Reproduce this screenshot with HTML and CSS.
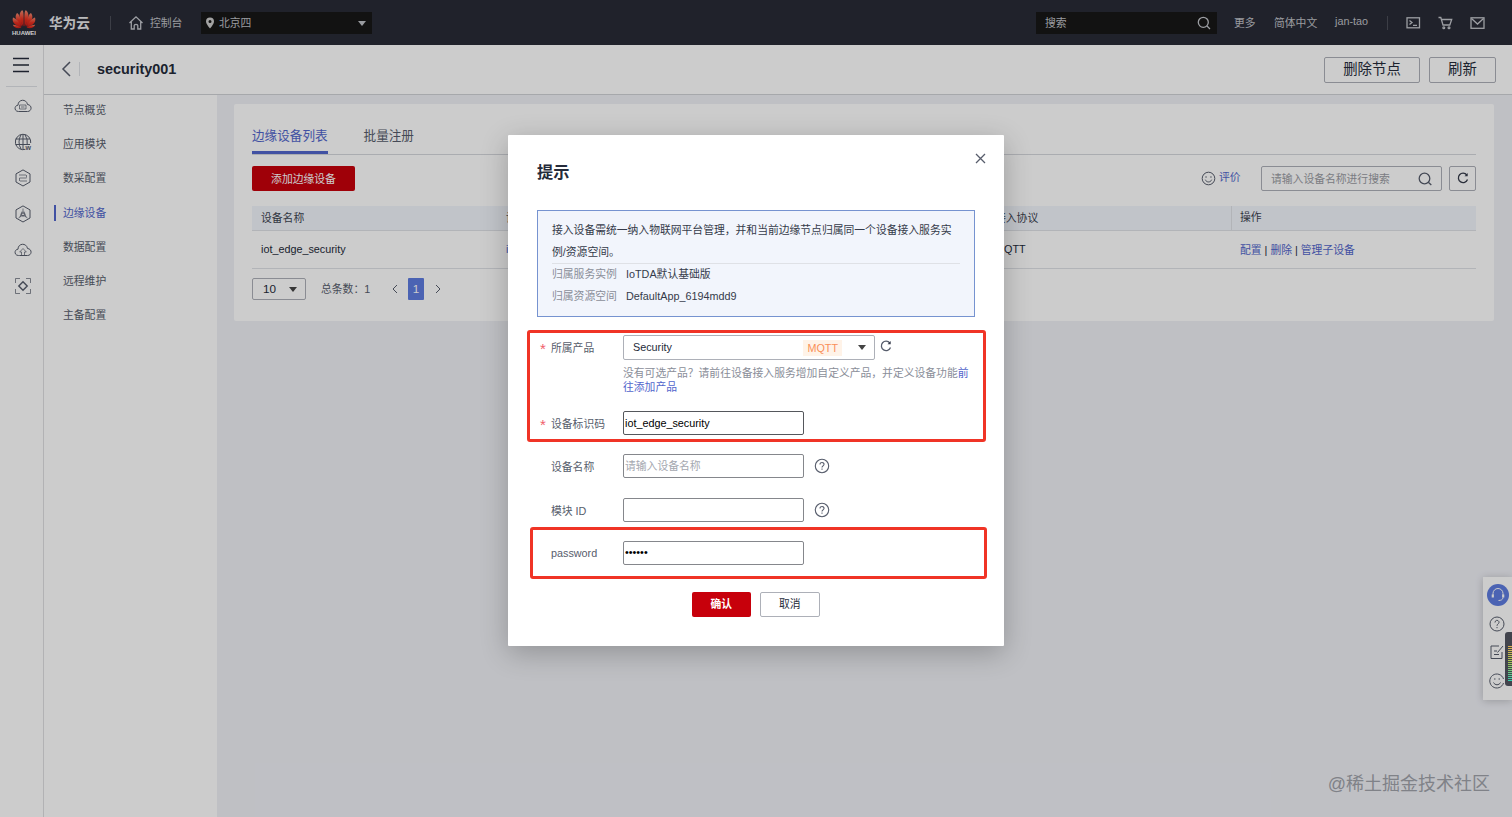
FILE: index.html
```
<!DOCTYPE html>
<html lang="zh-CN">
<head>
    <meta charset="UTF-8">
    <meta name="viewport" content="width=device-width, initial-scale=1.0">
    <title>security001 - 华为云</title>
    <link rel="stylesheet" href="styles.css">
</head>
<body>
    <header class="topbar">
        <svg class="logo" width="26" height="28" viewBox="0 0 26 28">
            <defs>
                <linearGradient id="petal" x1="0" y1="0" x2="0" y2="1">
                    <stop offset="0" stop-color="#f08a70"/>
                    <stop offset="0.55" stop-color="#e8301f"/>
                    <stop offset="1" stop-color="#c81a18"/>
                </linearGradient>
            </defs>
            <g fill="url(#petal)">
                <path d="M12.5 17.5C9 12 6.5 5 11 1.2C12.6 1 12.9 6 12.5 17.5Z"/>
                <path d="M13.5 17.5C17 12 19.5 5 15 1.2C13.4 1 13.1 6 13.5 17.5Z"/>
                <path d="M11.5 17.5C6 14 2.5 8.5 6 4C8 4.5 10 10 11.5 17.5Z"/>
                <path d="M14.5 17.5C20 14 23.5 8.5 20 4C18 4.5 16 10 14.5 17.5Z"/>
                <path d="M10.5 18C4 17 0.5 13 2 8.5C5 9.5 8.5 13 10.5 18Z"/>
                <path d="M15.5 18C22 17 25.5 13 24 8.5C21 9.5 17.5 13 15.5 18Z"/>
                <path d="M10.5 18.7C6 20 3 18.5 1.8 15.8C4.5 16 8 17 10.5 18.7Z"/>
                <path d="M15.5 18.7C20 20 23 18.5 24.2 15.8C21.5 16 18 17 15.5 18.7Z"/>
            </g>
            <text x="13" y="25.5" text-anchor="middle" textLength="24" lengthAdjust="spacingAndGlyphs" class="logo-text">HUAWEI</text>
        </svg>
        <span class="brand">华为云</span>
        <span class="sep"></span>
        <svg class="home" width="16" height="16" viewBox="0 0 16 16"><path d="M1.5 8L8 1.8L14.5 8M3.3 6.8V14H6.2V10.5C6.2 9 9.8 9 9.8 10.5V14H12.7V6.8"/></svg>
        <span class="console">控制台</span>
        <div class="region">
            <svg width="10" height="12" viewBox="0 0 10 12"><path fill="#ccc" fill-rule="evenodd" d="M5 0.5A4 4 0 0 1 9 4.5C9 7 5 11.5 5 11.5C5 11.5 1 7 1 4.5A4 4 0 0 1 5 0.5ZM5 3A1.5 1.5 0 1 0 5 6A1.5 1.5 0 1 0 5 3Z"/></svg>
            <span>北京四</span>
            <i class="caret"></i>
        </div>
        <div class="top-search">
            <span>搜索</span>
            <svg width="14" height="14" viewBox="0 0 14 14"><circle cx="6.3" cy="6.3" r="5"/><path d="M10 10L13 13"/></svg>
        </div>
        <span class="more">更多</span>
        <span class="lang">简体中文</span>
        <span class="user">jan-tao</span>
        <span class="sep sep-right"></span>
        <div class="top-icons">
            <svg width="15" height="14" viewBox="0 0 15 14"><rect x="1" y="1.8" width="12.5" height="10"/><path d="M3.5 4.5L6 6.5L3.5 8.5M7 9.3H11"/></svg>
            <svg width="15" height="14" viewBox="0 0 15 14"><path d="M0.5 1.5H2.8L5 9H11.8L13.7 3.5H3.5"/><circle cx="5.8" cy="11.8" r="0.9"/><circle cx="11" cy="11.8" r="0.9"/></svg>
            <svg width="15" height="14" viewBox="0 0 15 14"><rect x="1" y="1.8" width="13" height="10.5"/><path d="M1.5 2.5L7.5 8L13.5 2.5"/></svg>
        </div>
    </header>

    <div class="page">
        <nav class="rail">
            <svg class="burger" width="18" height="16" viewBox="0 0 18 16"><path d="M1 1.5H17M1 8H17M1 14.5H17"/></svg>
            <div class="rail-icons">
                <svg width="18" height="18" viewBox="0 0 18 18"><path d="M4.5 14.5C0 14.5 0 8.5 4 8.2C4 2 12.5 1.5 13.5 7.5C18.5 8 18 14.5 13.5 14.5Z"/><path d="M5.5 8H12V12H5.5ZM7 10H10.5" class="thin"/></svg>
                <svg width="18" height="18" viewBox="0 0 18 18"><path d="M11.5 16.3A7.7 7.7 0 1 1 16.7 10"/><path d="M9 1.3V16.5M1.5 6H16M1.5 11.5H16M7 1.7Q3 9 7 16M11 1.7Q14 6 13.2 11.5"/><text x="11.5" y="16.5" class="globe-w">w</text></svg>
                <svg width="18" height="18" viewBox="0 0 18 18"><path d="M9 0.9L16 4.9V13L9 17L2 13V4.9Z"/><path d="M5 6H12M12.5 6V8.5M5.5 9H12.5M5.5 9V12M6 12H13" class="thin"/></svg>
                <svg width="18" height="18" viewBox="0 0 18 18"><path d="M9 0.9L16 4.9V13L9 17L2 13V4.9Z"/><path d="M9 3.5V8M9 10L4.5 13M9 10L13.5 13M6 12L8 6.5M12 12L10 6.5" class="thin"/><circle cx="9" cy="9.5" r="1.6"/></svg>
                <svg width="18" height="18" viewBox="0 0 18 18"><path d="M5.5 14.5H4.5C0 14.5 0 8.5 4 8.2C4 2 12.5 1.5 13.5 7.5C18.5 8 18 14.5 13.5 14.5Z"/><path d="M7.5 14V11H5.7L9 7.5L12.3 11H10.5V14" class="thin"/></svg>
                <svg width="18" height="18" viewBox="0 0 18 18"><path d="M1.5 6V1.5H6M12 1.5H16.5V6M16.5 12V16.5H12M6 16.5H1.5V12" class="thin"/><path d="M9 4.8L13.2 9L9 13.2L4.8 9Z" class="bold"/></svg>
            </div>
        </nav>

        <div class="main">
            <div class="titlebar">
                <svg class="back" width="10" height="16" viewBox="0 0 10 16"><path d="M9 1L2 8L9 15"/></svg>
                <h1>security001</h1>
                <button class="btn-lg">删除节点</button>
                <button class="btn-lg btn-refresh">刷新</button>
            </div>
            <div class="body">
                <ul class="menu">
                    <li>节点概览</li>
                    <li>应用模块</li>
                    <li>数采配置</li>
                    <li class="active">边缘设备</li>
                    <li>数据配置</li>
                    <li>远程维护</li>
                    <li>主备配置</li>
                </ul>
                <div class="content">
                    <div class="card">
                        <div class="tabs">
                            <span class="tab active">边缘设备列表</span>
                            <span class="tab">批量注册</span>
                        </div>
                        <div class="toolbar">
                            <button class="btn-red add">添加边缘设备</button>
                            <svg class="smile" width="15" height="15" viewBox="0 0 15 15"><circle cx="7.5" cy="7.5" r="6.3"/><path d="M4.3 8.7C5.5 11.7 9.5 11.7 10.7 8.7M4.3 6H5.8M9.2 6H10.7"/></svg>
                            <a class="rate">评价</a>
                            <div class="search">
                                <span>请输入设备名称进行搜索</span>
                                <svg width="14" height="14" viewBox="0 0 14 14"><circle cx="6.5" cy="6.5" r="5.3"/><path d="M10.3 10.3L13.3 13"/></svg>
                            </div>
                            <button class="reload">
                                <svg width="12" height="12" viewBox="0 0 12 12"><path d="M9.8 3A4.7 4.7 0 1 0 10.5 7.5"/><path d="M10.7 1V4.2H7.5Z" class="tip"/></svg>
                            </button>
                        </div>
                        <div class="row head">
                            <span>设备名称</span><span>设备ID</span><span>接入协议</span><span class="ops">操作</span>
                        </div>
                        <div class="row">
                            <span>iot_edge_security</span><span><a>iot_edge</a></span><span>MQTT</span><span class="ops"><a>配置</a> | <a>删除</a> | <a>管理子设备</a></span>
                        </div>
                        <div class="pager">
                            <div class="size"><span>10</span><i class="caret"></i></div>
                            <span class="total">总条数：1</span>
                            <svg width="6" height="10" viewBox="0 0 6 10"><path d="M5 1L1 5L5 9"/></svg>
                            <span class="num">1</span>
                            <svg width="6" height="10" viewBox="0 0 6 10"><path d="M1 1L5 5L1 9"/></svg>
                        </div>
                    </div>
                </div>
            </div>
        </div>
    </div>

    <div class="float">
        <span class="service">
            <svg width="16" height="16" viewBox="0 0 16 16"><path d="M3 8V6.5A5 5 0 0 1 13 6.5V8M13 10.5C13 12.5 11 13.5 8.5 13.5"/><path d="M2.8 7.5V10.5M13.2 7.5V10.5" class="ear"/></svg>
        </span>
        <svg width="16" height="16" viewBox="0 0 16 16"><circle cx="8" cy="8" r="7"/><path d="M6 6.5C6 3.5 10.2 3.8 10 6.5C9.9 7.8 8 8 8 9.8M8 11V12.2"/></svg>
        <svg width="16" height="16" viewBox="0 0 16 16"><path d="M10 2H2V14.5H13V8M5 7H8M5 10.5H10M8.5 8.5L14 2"/></svg>
        <svg width="16" height="16" viewBox="0 0 16 16"><path d="M14.5 6A7 7 0 1 0 14.5 10M4.5 9.5C6 12.5 10 12.5 11.5 9.5M5 6H6.5M9.5 6H11"/></svg>
    </div>

    <div class="mask"></div>
    <div class="meter"><i></i></div>

    <div class="modal">
        <svg class="close" width="11" height="11" viewBox="0 0 11 11"><path d="M1 1L10 10M10 1L1 10"/></svg>
        <h2>提示</h2>
        <div class="info">
            <p>接入设备需统一纳入物联网平台管理，并和当前边缘节点归属同一个设备接入服务实<br>例/资源空间。</p>
            <div class="info-list">
                <div><label>归属服务实例</label>IoTDA默认基础版</div>
                <div><label>归属资源空间</label>DefaultApp_6194mdd9</div>
            </div>
        </div>
        <div class="field product">
            <label><b>*</b>所属产品</label>
            <div class="control">
                <div class="select-line">
                    <div class="select"><span>Security</span><em>MQTT</em><i class="caret"></i></div>
                    <svg width="12" height="12" viewBox="0 0 12 12"><path d="M9.8 3A4.7 4.7 0 1 0 10.5 7.5"/><path d="M10.7 1V4.2H7.5Z" class="tip"/></svg>
                </div>
                <p class="hint">没有可选产品？请前往设备接入服务增加自定义产品，并定义设备功能<a>前<br>往添加产品</a></p>
            </div>
        </div>
        <div class="field">
            <label><b>*</b>设备标识码</label>
            <input class="dark" type="text" value="iot_edge_security">
        </div>
        <div class="field">
            <label>设备名称</label>
            <input type="text" placeholder="请输入设备名称">
            <svg class="help" width="16" height="16" viewBox="0 0 16 16"><circle cx="8" cy="8" r="6.7"/><path d="M6 6.5C6 3.7 10.2 3.9 10 6.5C9.9 7.8 8 8 8 9.5M8 10.6V11.8"/></svg>
        </div>
        <div class="field">
            <label>模块 ID</label>
            <input type="text">
            <svg class="help" width="16" height="16" viewBox="0 0 16 16"><circle cx="8" cy="8" r="6.7"/><path d="M6 6.5C6 3.7 10.2 3.9 10 6.5C9.9 7.8 8 8 8 9.5M8 10.6V11.8"/></svg>
        </div>
        <div class="field">
            <label>password</label>
            <input type="text" class="pwd" value="••••••">
        </div>
        <div class="actions">
            <button class="btn-red ok">确认</button>
            <button class="cancel">取消</button>
        </div>
        <div class="mark mark-top"></div>
        <div class="mark mark-bottom"></div>
    </div>

    <div class="watermark">@稀土掘金技术社区</div>
</body>
</html>
```
FILE: styles.css
```
*{
    margin: 0;
    padding: 0;
    box-sizing: border-box;
}
body{
    width: 1512px;
    height: 817px;
    overflow: hidden;
    font-family: "Liberation Sans", "Noto Sans CJK SC", sans-serif;
    font-size: 10.8px;
    color: #252b3a;
    background-color: #eff0f6;
}
svg{
    fill: none;
    stroke: #575d6c;
    flex: none;
}
span, label{
    white-space: nowrap;
}
button, input{
    font-family: inherit;
    font-size: 10.8px;
    outline: none;
}
a{
    color: #5266cc;
}
.caret{
    border: 4px solid transparent;
    border-top: 5px solid #444;
    border-bottom: 0;
}
.topbar{
    height: 45px;
    padding-left: 11px;
    display: flex;
    align-items: center;
    background-color: #282b36;
    color: #c0c2c8;
}
.topbar svg{
    stroke: #c4c6cc;
    stroke-width: 1.3;
}
.topbar .logo{
    stroke: none;
    height: 28px;
}
.topbar span{
    padding-bottom: 2px;
}
.logo-text{
    font-size: 6px;
    font-weight: bold;
    fill: #fff;
}
.brand{
    margin-left: 12px;
    width: 49px;
    font-size: 13.6px;
    font-weight: bold;
    color: #e8e9ec;
}
.sep{
    width: 1px;
    height: 14px;
    margin-left: 12px;
    background-color: #4b4e58;
}
.home{
    margin-left: 17px;
}
.console{
    margin-left: 6px;
    width: 33px;
}
.region{
    margin-left: 18px;
    width: 171px;
    height: 22px;
    padding: 0 6px 0 4px;
    display: flex;
    align-items: center;
    background-color: #171717;
}
.region svg{
    stroke: none;
    margin-right: 4px;
}
.region .caret{
    margin-left: auto;
    margin-top: 2px;
    border-top-color: #c0c2c8;
}
.top-search{
    margin-left: 664px;
    width: 181px;
    height: 22px;
    padding: 0 6px 0 9px;
    display: flex;
    align-items: center;
    justify-content: space-between;
    background-color: #171717;
}
.more{
    margin-left: 17px;
    width: 22px;
}
.lang{
    margin-left: 18px;
    width: 43px;
}
.topbar .user{
    margin-left: 18px;
    width: 34px;
    padding-bottom: 3px;
}
.sep-right{
    margin-left: 18px;
}
.top-icons{
    margin-left: 18px;
    display: flex;
    gap: 17px;
}
.page{
    display: flex;
    height: 772px;
}
.rail{
    width: 44px;
    background-color: #fff;
    border-right: 1px solid #dfdfe2;
}
.burger{
    display: block;
    margin: 12px 0 0 12px;
    stroke: #252b3a;
    stroke-width: 1.6;
}
.rail-icons{
    margin: 13px 6px 0 6px;
    padding: 10px 0 0 8px;
    border-top: 1px solid #dfe1e6;
    display: flex;
    flex-direction: column;
    gap: 18px;
}
.thin{
    stroke-width: 0.7;
}
.bold{
    stroke-width: 1.4;
}
.globe-w{
    font-size: 7px;
    font-weight: bold;
    fill: #575d6c;
    stroke: none;
}
.main{
    flex: 1;
    display: flex;
    flex-direction: column;
}
.titlebar{
    height: 50px;
    padding: 0 16px 0 17px;
    display: flex;
    align-items: center;
    background-color: #fff;
    border-bottom: 1px solid #d0d2d6;
}
.back{
    margin-bottom: 2px;
    stroke-width: 1.5;
}
.titlebar h1{
    flex: 1;
    margin: 0 0 2px 8px;
    padding-left: 17px;
    border-left: 1px solid #dfe1e6;
    font-size: 14.4px;
    line-height: 14px;
    color: #252b3a;
}
.btn-lg{
    width: 96px;
    height: 26px;
    padding-bottom: 2px;
    border: 1px solid #adb0b8;
    border-radius: 2px;
    background-color: #fff;
    color: #252b3a;
    font-size: 14.4px;
    line-height: 22px;
}
.btn-refresh{
    width: 67px;
    margin-left: 9px;
}
.body{
    flex: 1;
    display: flex;
}
.menu{
    width: 173px;
    padding-top: 6px;
    background-color: #fff;
    list-style: none;
    color: #575d6c;
}
.menu li{
    height: 16px;
    margin: 0 0 18.2px 10px;
    padding-left: 9px;
    line-height: 20px;
    display: flex;
    align-items: center;
}
.menu .active{
    padding-left: 7px;
    border-left: 2px solid #5266cc;
    color: #5266cc;
}
.menu li:first-child{
    margin-top: 1px;
}
.content{
    flex: 1;
    padding: 9px 18px 0 17px;
}
.card{
    height: 217px;
    padding: 0 18px;
    background-color: #fff;
    border-radius: 2px;
}
.tabs{
    height: 51px;
    padding-top: 21px;
    display: flex;
    gap: 36px;
    font-size: 12.6px;
    color: #575d6c;
    border-bottom: 1px solid #d5d7dc;
}
.tab{
    height: 30px;
    line-height: 22px;
}
.tabs .active{
    height: 29px;
    color: #5266cc;
    border-bottom: 3px solid #5266cc;
}
.toolbar{
    height: 51px;
    padding-top: 11px;
    display: flex;
    align-items: flex-start;
}
.btn-red{
    height: 25px;
    padding-bottom: 2px;
    border: none;
    border-radius: 2px;
    background-color: #c7000b;
    color: #fff;
}
.add{
    width: 103px;
    margin-right: auto;
}
.smile{
    margin: 5px 3px 0 0;
}
.rate{
    width: 22px;
    margin-right: 20px;
    line-height: 22px;
    white-space: nowrap;
}
.search{
    width: 181px;
    height: 25px;
    padding: 0 9px;
    display: flex;
    align-items: center;
    justify-content: space-between;
    border: 1px solid #adb0b8;
    border-radius: 2px;
    color: #9a9ca3;
}
.search span{
    padding-bottom: 2px;
}
.search svg{
    stroke-width: 1.3;
}
.reload{
    width: 27px;
    height: 25px;
    margin-left: 7px;
    padding-top: 1px;
    border: 1px solid #adb0b8;
    border-radius: 2px;
    background-color: #fff;
}
.reload svg{
    stroke: #353b4a;
    stroke-width: 1.3;
}
.tip{
    fill: #353b4a;
    stroke: none;
}
.row{
    height: 38px;
    display: grid;
    grid-template-columns: 245px 489px 245px 245px;
    align-items: center;
    border-bottom: 1px solid #dfe1e6;
}
.row span{
    padding: 0 0 2px 9px;
}
.head{
    height: 25px;
    background-color: #f2f5fc;
    color: #3d4350;
}
.head .ops{
    padding-left: 8px;
    line-height: 22px;
    border-left: 1px solid #dfe1e6;
}
.pager{
    padding-top: 9px;
    display: flex;
    align-items: center;
    color: #575d6c;
}
.size{
    width: 54px;
    height: 22px;
    margin-right: 15px;
    padding: 0 8px 0 10px;
    display: flex;
    align-items: center;
    justify-content: space-between;
    border: 1px solid #adb0b8;
    border-radius: 2px;
    color: #252b3a;
    font-size: 11.7px;
}
.size span{
    padding-bottom: 1px;
}
.total{
    width: 71px;
    padding-bottom: 2px;
}
.num{
    width: 16px;
    height: 22px;
    margin: 0 11px 0 10px;
    line-height: 22px;
    text-align: center;
    background-color: #5e7ce0;
    color: #fff;
    border-radius: 1px;
    font-size: 11.7px;
}
.float{
    position: absolute;
    right: 0;
    top: 577px;
    width: 29px;
    height: 123px;
    padding: 7px 0 0 4px;
    background-color: #fff;
    box-shadow: 0 1px 8px rgba(0,0,0,0.2);
    display: flex;
    flex-direction: column;
    gap: 12.7px;
}
.float svg{
    margin-left: 2px;
}
.service{
    width: 22px;
    height: 22px;
    margin-bottom: -3px;
    border-radius: 50%;
    background-color: #5e7ce0;
}
.service svg{
    display: block;
    margin: 3px;
    stroke: #fff;
}
.float .service svg{
    margin-left: 3px;
}
.ear{
    stroke-width: 2.2;
}
.mask{
    position: absolute;
    inset: 0;
    background-color: rgba(0,0,0,0.2);
}
.meter{
    position: absolute;
    right: 0;
    top: 632px;
    width: 7px;
    height: 54px;
    padding: 14px 0 0 3px;
    border-radius: 3px 0 0 3px;
    background-color: #42444d;
}
.meter i{
    display: block;
    height: 35px;
    background: repeating-linear-gradient(transparent 0 1px, #42444d 1px 2px), linear-gradient(#e0b050, #a8c850 45%, #30d0b0);
}
.modal{
    position: absolute;
    left: 508px;
    top: 135px;
    width: 496px;
    height: 511px;
    padding: 25px 29px 0 29px;
    background-color: #fff;
    border-radius: 1px;
    box-shadow: 0 7px 28px rgba(0,0,0,0.24);
}
.close{
    position: absolute;
    right: 18px;
    top: 18px;
    stroke-width: 1.3;
}
.modal h2{
    height: 50px;
    font-size: 16.2px;
    line-height: 24px;
    color: #252b3a;
}
.info{
    height: 107px;
    padding: 9px 14px;
    line-height: 21.6px;
    border: 1px solid #7693d0;
    background-color: #f2f5fc;
    color: #353b4a;
}
.info p{
    white-space: nowrap;
}
.info-list{
    border-top: 1px solid #dfe1e6;
}
.info label{
    display: inline-block;
    width: 74px;
    color: #8a8e99;
}
.field{
    height: 23px;
    margin-bottom: 20.3px;
    display: flex;
    align-items: center;
}
.field > label{
    position: relative;
    width: 86px;
    padding-left: 14px;
    color: #575d6c;
}
.field b{
    position: absolute;
    left: 3px;
    top: 1px;
    font-size: 15px;
    font-weight: normal;
    color: #f0606a;
}
.product{
    height: 77px;
    margin: 18px 0 -0.5px 0;
    align-items: flex-start;
}
.product > label{
    line-height: 26px;
}
.select-line{
    display: flex;
}
.select-line svg{
    margin: 5px 0 0 5px;
    stroke-width: 1.3;
}
.select{
    width: 252px;
    height: 25px;
    padding: 0 8px 0 9px;
    display: flex;
    align-items: center;
    border: 1px solid #adb0b8;
    border-radius: 2px;
}
.select span{
    padding-bottom: 1px;
}
.select em{
    margin: 1px 16px 0 auto;
    padding: 0 4px;
    line-height: 16px;
    font-style: normal;
    color: #fa9058;
    background-color: #fff3e8;
}
.hint{
    margin-top: 6px;
    line-height: 14px;
    white-space: nowrap;
    color: #8a8e99;
}
.field input{
    width: 181px;
    height: 24px;
    padding: 0 1px;
    border: 1px solid #85878c;
    border-radius: 2px;
    color: #000;
}
.field .dark{
    border-color: #55575c;
}
.field input::placeholder{
    color: #a5a8b0;
}
.field .pwd{
    padding-bottom: 1px;
}
.help{
    margin-left: 10px;
    stroke-width: 1.1;
}
.actions{
    padding: 7px 1px 0 0;
    display: flex;
    justify-content: center;
    gap: 9px;
}
.actions button{
    width: 59.5px;
    height: 25px;
    padding-bottom: 2px;
}
.ok{
    font-weight: bold;
}
.cancel{
    border: 1px solid #adb0b8;
    border-radius: 2px;
    background-color: #fff;
    color: #252b3a;
}
.mark{
    position: absolute;
    border: 3px solid #f03426;
    border-radius: 3px;
}
.mark-top{
    left: 19px;
    top: 195px;
    width: 459px;
    height: 112px;
}
.mark-bottom{
    left: 22px;
    top: 392px;
    width: 457px;
    height: 52px;
}
.watermark{
    position: absolute;
    right: 22px;
    bottom: 20px;
    font-size: 18px;
    line-height: 26px;
    color: #808288;
}
```
